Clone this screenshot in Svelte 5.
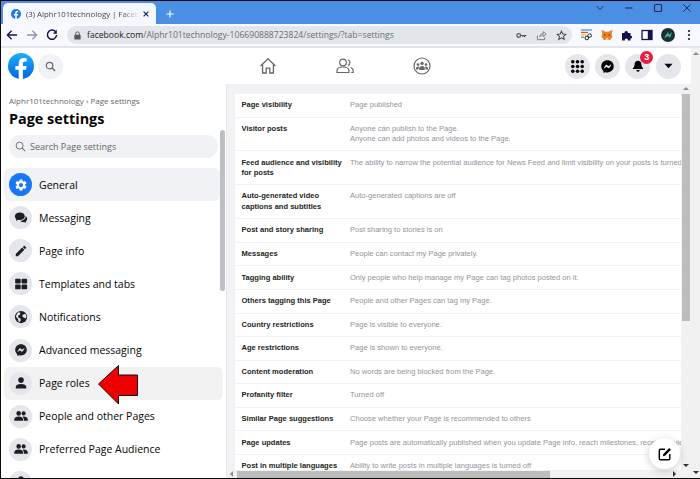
<script>
  const sideItems = [
    { label: 'General', icon: 'gear', state: 'active' },
    { label: 'Messaging', icon: 'chat' },
    { label: 'Page info', icon: 'pencil' },
    { label: 'Templates and tabs', icon: 'grid' },
    { label: 'Notifications', icon: 'globe' },
    { label: 'Advanced messaging', icon: 'messenger' },
    { label: 'Page roles', icon: 'person', state: 'hover' },
    { label: 'People and other Pages', icon: 'people' },
    { label: 'Preferred Page Audience', icon: 'people' },
    { label: '', icon: 'person' }
  ];

  const rows = [
    { label: 'Page visibility', value: ['Page published'] },
    { label: 'Visitor posts', value: ['Anyone can publish to the Page.', 'Anyone can add photos and videos to the Page.'] },
    { label: 'Feed audience and visibility for posts', value: ['The ability to narrow the potential audience for News Feed and limit visibility on your posts is turned off'] },
    { label: 'Auto-generated video captions and subtitles', value: ['Auto-generated captions are off'] },
    { label: 'Post and story sharing', value: ['Post sharing to stories is on'] },
    { label: 'Messages', value: ['People can contact my Page privately.'] },
    { label: 'Tagging ability', value: ['Only people who help manage my Page can tag photos posted on it.'] },
    { label: 'Others tagging this Page', value: ['People and other Pages can tag my Page.'] },
    { label: 'Country restrictions', value: ['Page is visible to everyone.'] },
    { label: 'Age restrictions', value: ['Page is shown to everyone.'] },
    { label: 'Content moderation', value: ['No words are being blocked from the Page.'] },
    { label: 'Profanity filter', value: ['Turned off'] },
    { label: 'Similar Page suggestions', value: ['Choose whether your Page is recommended to others'] },
    { label: 'Page updates', value: ['Page posts are automatically published when you update Page info, reach milestones, receive reviews'] },
    { label: 'Post in multiple languages', value: ['Ability to write posts in multiple languages is turned off'] }
  ];

  const messengerPath = 'M12 2C6.36 2 2 6.13 2 11.7c0 2.91 1.19 5.44 3.14 7.17.16.13.26.35.27.57l.05 1.78c.04.57.61.94 1.13.71l1.98-.87c.17-.06.36-.09.53-.06.9.27 1.9.4 2.9.4 5.64 0 10-4.13 10-9.7S17.64 2 12 2zm6 7.46-2.93 4.67c-.47.73-1.47.92-2.17.37l-2.34-1.73a.6.6 0 0 0-.72 0l-3.16 2.4c-.42.33-.97-.17-.68-.63l2.93-4.67c.47-.73 1.47-.92 2.17-.4l2.34 1.76a.6.6 0 0 0 .72 0l3.16-2.4c.42-.33.97.17.68.63z';
</script>

<div class="window">
  <div class="tabstrip">
    <div class="tab">
      <svg class="favicon" viewBox="0 0 24 24"><circle cx="12" cy="12" r="12" fill="#1877f2"/><path d="M16.6 15.4l.6-3.4h-3.4V9.8c0-1 .5-1.9 2-1.9h1.5V5c0 0-1.4-.2-2.7-.2-2.8 0-4.5 1.6-4.5 4.6V12H7v3.4h3.1V24h3.7v-8.6z" fill="#fff"/></svg>
      <span class="tab-title">(3) Alphr101technology | Facebook</span>
      <svg class="tab-x" viewBox="0 0 10 10"><path d="M2 2l6 6M8 2l-6 6" stroke="#1f2a55" stroke-width="1.5"/></svg>
    </div>
    <svg class="plus" viewBox="0 0 10 10"><path d="M5 .5v9M.5 5h9" stroke="#fff" stroke-width="1.4"/></svg>
    <div class="win-controls">
      <svg viewBox="0 0 10 10"><path d="M1.5 3L5 6.5 8.5 3" fill="none" stroke="#1f2a55"/></svg>
      <svg viewBox="0 0 10 10"><path d="M1.5 5h7" stroke="#1f2a55" stroke-width="1.1"/></svg>
      <svg viewBox="0 0 10 10"><rect x="1.5" y="1.5" width="7" height="7" rx="1" fill="none" stroke="#1f2a55" stroke-width="1.1"/></svg>
      <svg viewBox="0 0 10 10"><path d="M1.5 1.5l7 7M8.5 1.5l-7 7" stroke="#1f2a55"/></svg>
    </div>
  </div>

  <div class="toolbar">
    <svg class="tb-icon" viewBox="0 0 12 12"><path d="M11 6H1.6M5.6 1.8L1.4 6l4.2 4.2" fill="none" stroke="#14144a" stroke-width="1.4"/></svg>
    <svg class="tb-icon" viewBox="0 0 12 12"><path d="M1 6h9.4M6.4 1.8L10.6 6l-4.2 4.2" fill="none" stroke="#8f8fb5" stroke-width="1.3"/></svg>
    <svg class="tb-icon" viewBox="0 0 12 12"><path d="M10 3.4A4.6 4.6 0 1 0 10.6 6" fill="none" stroke="#14144a" stroke-width="1.5"/><path d="M10.8 .8v4H6.8z" fill="#14144a"/></svg>
    <div class="omnibox">
      <svg class="lock" viewBox="0 0 10 10"><rect x="1.5" y="4.2" width="7" height="5.3" rx="1" fill="#55565a"/><path d="M3 4.5V3a2 2 0 0 1 4 0v1.5" fill="none" stroke="#55565a" stroke-width="1.1"/></svg>
      <span class="url"><b>facebook.com</b>/Alphr101technology-106690888723824/settings/?tab=settings</span>
      <svg class="omni-icon" viewBox="0 0 12 12"><circle cx="3" cy="6" r="2" fill="none" stroke="#55565a" stroke-width="1.4"/><path d="M5 6h6.4M9.4 6v2M7.6 6v1.6" stroke="#55565a" stroke-width="1.3"/></svg>
      <svg class="omni-icon" viewBox="0 0 12 12"><path d="M1.5 6v4.5h8V8M4 7.5C4.4 5 6 3.8 8 3.8V1.8L11 4.6 8 7.2V5.4C6.4 5.4 5 6 4 7.5z" fill="none" stroke="#77787c"/></svg>
      <svg class="omni-icon" viewBox="0 0 12 12"><path d="M6 1.2l1.4 3.2 3.4.3-2.6 2.2.8 3.4L6 8.5l-3 1.8.8-3.4L1.2 4.7l3.4-.3z" fill="none" stroke="#45464a" stroke-width="1.1"/></svg>
    </div>
    <div class="extensions">
      <svg viewBox="0 0 12 12"><path d="M0 1h11" stroke="#4285f4" stroke-width="1.2"/><path d="M0 3.4h7" stroke="#ea4335" stroke-width="1.2"/><path d="M0 5.8h5" stroke="#fbbc05" stroke-width="1.2"/><path d="M0 8.2h3" stroke="#34a853" stroke-width="1.2"/><circle cx="5.8" cy="9" r="1.8" fill="none" stroke="#222"/><circle cx="8.6" cy="6.6" r="1.8" fill="none" stroke="#222"/></svg>
      <svg viewBox="0 0 12 12"><path d="M.5.8l4 2h3l4-2-.8 4 .8 3-2.6 3.4-2-.7H5.1l-2 .7L.5 7.8l.8-3z" fill="#e8832a"/><path d="M3 5l2 1-1.5 1zM9 5L7 6l1.5 1z" fill="#5a3414"/><path d="M5 9h2v1.6H5z" fill="#f5d3b0"/></svg>
      <svg viewBox="0 0 12 12"><path d="M1 4h2.600a1.700 1.700 0 1 1 3.300 0H9.500v2.400a1.600 1.600 0 1 1 0 3.200V11.500H6.800a1.500 1.500 0 1 0-2.900 0H1z" fill="#14144a"/></svg>
      <svg viewBox="0 0 12 12"><rect x="1" y="1.5" width="10" height="9" fill="none" stroke="#14144a" stroke-width="1.3"/><rect x="6.8" y="1.5" width="4.2" height="9" fill="#14144a"/></svg>
      <svg class="avatar" viewBox="0 0 14 14"><circle cx="7" cy="7" r="7" fill="#183038"/><path d="M3 10L7 4l1 3 3-3-2 6-1.500-2z" fill="#49b89a"/></svg>
      <svg viewBox="0 0 12 12"><circle cx="6" cy="2" r="1.100" fill="#14144a"/><circle cx="6" cy="6" r="1.100" fill="#14144a"/><circle cx="6" cy="10" r="1.100" fill="#14144a"/></svg>
    </div>
  </div>

  <div class="page">
    <div class="page-main">
      <header class="fb-header">
        <div class="fb-left">
          <svg class="fb-logo" viewBox="0 0 26 26">
            <defs><linearGradient id="fbBlue" x1="0" y1="0" x2="0" y2="1"><stop offset="0" stop-color="#1aaffb"/><stop offset="1" stop-color="#0165e1"/></linearGradient></defs>
            <circle cx="13" cy="13" r="13" fill="url(#fbBlue)"/>
            <path d="M18 16.7l.6-3.7h-3.700v-2.400c0-1 .5-2 2.100-2h1.700V5.400s-1.500-.3-3-.3c-3 0-5 1.800-5 5.100V13H7.400v3.700h3.300V26h4.200v-9.300z" fill="#fff"/>
          </svg>
          <div class="round light">
            <svg viewBox="0 0 12 12" width="11" height="11"><circle cx="5" cy="5" r="3.6" fill="none" stroke="#65676b" stroke-width="1.3"/><path d="M7.700 7.700l3.300 3.300" stroke="#65676b" stroke-width="1.5"/></svg>
          </div>
        </div>
        <nav class="fb-nav">
          <svg viewBox="0 0 18 18" width="18" height="18"><path d="M1.500 9L9 1.800 16.500 9M3.600 7.400V16h3.600v-4.800h3.600V16h3.600V7.400" fill="none" stroke="#65676b" stroke-width="1.3"/></svg>
          <svg viewBox="0 0 18 18" width="18" height="18"><circle cx="7" cy="5.5" r="3.3" fill="none" stroke="#65676b" stroke-width="1.2"/><path d="M1 15.500v-1.500c0-2.600 2.400-4 6-4s6 1.400 6 4v1.500z" fill="none" stroke="#65676b" stroke-width="1.2"/><path d="M12 2.800a3 3 0 0 1 0 5.600M14.500 10.500c1.600.6 2.700 1.700 2.700 3.300v1.700h-2" fill="none" stroke="#65676b" stroke-width="1.2"/></svg>
          <svg viewBox="0 0 18 18" width="18" height="18"><circle cx="9" cy="9" r="8" fill="none" stroke="#65676b" stroke-width="1.2"/><circle cx="9" cy="6.4" r="1.7" fill="#65676b"/><circle cx="5" cy="7.6" r="1.3" fill="#65676b"/><circle cx="13" cy="7.6" r="1.3" fill="#65676b"/><path d="M6.200 13v-1.600c0-1.400 1.300-2.300 2.800-2.300s2.800.9 2.800 2.300V13zM3 12.400v-1c0-1 .9-1.800 2.300-1.800l.6.100-.6 2.700zM15 12.400v-1c0-1-.9-1.800-2.300-1.800l-.6.100.6 2.700z" fill="#65676b"/></svg>
        </nav>
        <div class="fb-right">
          <div class="round">
            <svg viewBox="0 0 13 13" width="13" height="13">
              {#each [1.8, 6.5, 11.2] as cy}
                {#each [1.8, 6.5, 11.2] as cx}
                  <circle {cx} {cy} r="1.8" fill="#050505"/>
                {/each}
              {/each}
            </svg>
          </div>
          <div class="round"><svg viewBox="0 0 24 24" width="15" height="15"><path d={messengerPath} fill="#050505"/></svg></div>
          <div class="round">
            <svg viewBox="0 0 14 14" width="12" height="12"><path d="M7 .8c2.500 0 4 1.800 4 4.200 0 2.200.8 3.400 2 4.600v1H1v-1c1.200-1.200 2-2.400 2-4.600C3 2.600 4.500.8 7 .8z" fill="#050505"/><path d="M5 11.800h4a2 2 0 0 1-4 0z" fill="#050505"/></svg>
            <span class="badge">3</span>
          </div>
          <div class="round"><svg viewBox="0 0 10 6" width="9" height="6"><path d="M.5.5h9L5 5.500z" fill="#050505"/></svg></div>
        </div>
      </header>

      <div class="content">
        <aside class="sidebar">
          <div class="crumbs">Alphr101technology › Page settings</div>
          <h1>Page settings</h1>
          <div class="search">
            <svg viewBox="0 0 12 12" width="11" height="11"><circle cx="5" cy="5" r="3.8" fill="none" stroke="#65676b"/><path d="M7.800 7.800l3.400 3.400" stroke="#65676b" stroke-width="1.1"/></svg>
            <span>Search Page settings</span>
          </div>
          <ul class="menu">
            {#each sideItems as item}
              <li class="item {item.state ?? ''}">
                <span class="icon-wrap">
                  <svg viewBox="0 0 24 24" width="14" height="14">
                    {#if item.icon === 'gear'}
                      <path fill="#fff" d="M19.14 12.94c.04-.3.06-.61.06-.94 0-.32-.02-.64-.07-.94l2.03-1.58a.49.49 0 0 0 .12-.61l-1.92-3.32a.488.488 0 0 0-.59-.22l-2.39.96c-.5-.38-1.03-.7-1.62-.94l-.36-2.54a.484.484 0 0 0-.48-.41h-3.84c-.24 0-.43.17-.47.41l-.36 2.54c-.59.24-1.13.57-1.62.94l-2.39-.96c-.22-.08-.47 0-.59.22L2.74 8.87c-.12.21-.08.47.12.61l2.03 1.58c-.05.3-.09.63-.09.94s.02.64.07.94l-2.03 1.58a.49.49 0 0 0-.12.61l1.92 3.32c.12.22.37.29.59.22l2.39-.96c.5.38 1.03.7 1.62.94l.36 2.54c.05.24.24.41.48.41h3.84c.24 0 .44-.17.47-.41l.36-2.54c.59-.24 1.13-.56 1.62-.94l2.39.96c.22.08.47 0 .59-.22l1.92-3.32c.12-.22.07-.47-.12-.61l-2.01-1.58zM12 15.6c-1.98 0-3.6-1.62-3.6-3.6s1.62-3.6 3.6-3.6 3.6 1.62 3.6 3.6-1.62 3.6-3.6 3.6z"/>
                    {:else if item.icon === 'chat'}
                      <path fill="#1c1e21" d="M10 2.500C5 2.500 1.500 5.300 1.500 9c0 1.900.9 3.500 2.400 4.600L3.400 17l3.700-1.900c.9.2 1.900.4 2.900.4 5 0 8.500-2.800 8.500-6.500S15 2.500 10 2.500z"/>
                      <path fill="#1c1e21" d="M20 8.300c.1.300.1.500.1.800 0 4.400-4.100 7.700-9.600 8.100 1.200 1.200 3 1.900 5 1.900.6 0 1.300-.1 1.900-.2l3.100 1.800-.4-3c1.500-1 2.400-2.500 2.400-4.200 0-2-1-3.700-2.500-5.200z"/>
                    {:else if item.icon === 'pencil'}
                      <path fill="#1c1e21" d="M3 17.250V21h3.750L17.810 9.940l-3.750-3.750L3 17.250zM20.710 7.040c.39-.39.39-1.020 0-1.410l-2.340-2.340a.9959.9959 0 0 0-1.410 0l-1.830 1.830 3.750 3.750 1.830-1.830z"/>
                    {:else if item.icon === 'grid'}
                      <rect x="2" y="3" width="9.500" height="8" rx="1.500" fill="#1c1e21"/><rect x="13" y="3" width="9.500" height="8" rx="1.500" fill="#1c1e21"/><rect x="2" y="13" width="9.500" height="8" rx="1.500" fill="#1c1e21"/><rect x="13" y="13" width="9.500" height="8" rx="1.500" fill="#1c1e21"/>
                    {:else if item.icon === 'globe'}
                      <circle cx="12" cy="12" r="10.500" fill="#1c1e21"/>
                      <path fill="#e4e6eb" d="M7 3.800l4 1-.6 3-3.400 2.200.6 3.400 3.600 1 .3 3-1.600 3.200-2.300-1-.6-4-3.400-3.400.2-3.200zM15 8l4.500-1.400 2 4.400-1.800 3.500-3.200-1.500-2.500-2.500z"/>
                    {:else if item.icon === 'messenger'}
                      <path fill="#1c1e21" d={messengerPath}/>
                    {:else if item.icon === 'person'}
                      <circle cx="12" cy="7" r="4.800" fill="#1c1e21"/><path d="M3 21.500v-2.500c0-3.500 3.500-5.500 9-5.500s9 2 9 5.500v2.500z" fill="#1c1e21"/>
                    {:else}
                      <circle cx="8" cy="7.500" r="3.900" fill="#1c1e21"/><circle cx="16.500" cy="7.500" r="3.500" fill="#1c1e21"/><path d="M.5 20v-2c0-3 3-5 7.500-5s7.500 2 7.500 5v2z" fill="#1c1e21"/><path d="M16.800 20v-2.300c0-1.800-.8-3.300-2.200-4.500.7-.1 1.300-.2 2-.2 4 0 7 1.900 7 4.800V20z" fill="#1c1e21"/>
                    {/if}
                  </svg>
                </span>
                <span class="item-label">{item.label}</span>
              </li>
            {/each}
          </ul>
          <div class="side-thumb"></div>
          <svg class="red-arrow" viewBox="0 0 42 42" width="42" height="42"><path d="M1.500 20L21.500 1.500V11H40.500V31.500H21.500V40z" fill="#ee0000" stroke="#111"/></svg>
        </aside>

        <section class="panel">
          <div class="panel-top">
            <div class="viewport">
              <div class="table">
                {#each rows as row}
                  <div class="row">
                    <div class="row-label">{row.label}</div>
                    <div class="row-value">
                      {#each row.value as line}
                        <div>{line}</div>
                      {/each}
                    </div>
                  </div>
                {/each}
              </div>
            </div>
            <div class="vscroll">
              <span class="arrow up"></span>
              <div class="vthumb"></div>
              <span class="arrow down"></span>
            </div>
          </div>
          <div class="hscroll">
            <span class="arrow left"></span>
            <div class="hthumb"></div>
            <span class="arrow right"></span>
          </div>
          <button class="fab" aria-label="Compose">
            <svg viewBox="0 0 16 16" width="14" height="14"><path d="M8 2.500H3a1.500 1.500 0 0 0-1.500 1.500v9A1.500 1.500 0 0 0 3 14.500h9a1.500 1.500 0 0 0 1.500-1.500V8" fill="none" stroke="#050505" stroke-width="1.7"/><path d="M5.500 10.500l.6-2.600L12.800 1.200l2 2-6.700 6.700z" fill="#050505"/></svg>
          </button>
        </section>
      </div>
    </div>

    <div class="outer-scroll">
      <span class="arrow up"></span>
      <span class="arrow down"></span>
    </div>
  </div>
</div>

<style>
  :global(body) {
    margin: 0;
    background: #000;
  }

  .window {
    width: 699px;
    height: 477px;
    border: solid #0a0a0a;
    border-width: 1px 0 1px 1px;
    display: flex;
    flex-direction: column;
    overflow: hidden;
    font-family: 'Open Sans', 'Liberation Sans', sans-serif;
    background: #fff;
  }

  .tabstrip {
    height: 23px;
    flex: none;
    background: #4a8fe3;
    display: flex;
    align-items: flex-end;
    padding-left: 2px;
  }

  .tab {
    width: 153px;
    height: 21px;
    box-sizing: border-box;
    background: #f4f7fe;
    border-radius: 5px 5px 0 0;
    display: flex;
    align-items: center;
    padding: 0 6px 0 8px;
  }

  .favicon {
    width: 10px;
    height: 10px;
    flex: none;
  }

  .tab-title {
    flex: 1;
    margin-left: 5px;
    font-size: 7.8px;
    color: #45474f;
    white-space: nowrap;
    overflow: hidden;
    -webkit-mask-image: linear-gradient(90deg, #000 85%, transparent);
    mask-image: linear-gradient(90deg, #000 85%, transparent);
  }

  .tab-x {
    width: 8px;
    height: 8px;
    margin-left: 3px;
    flex: none;
  }

  .plus {
    width: 8px;
    height: 8px;
    margin: 0 0 6px 10px;
  }

  .win-controls {
    margin-left: auto;
    align-self: flex-start;
    display: flex;
    gap: 19px;
    padding: 2px 8px 0 0;
  }

  .win-controls svg {
    width: 10px;
    height: 10px;
  }

  .toolbar {
    height: 22px;
    flex: none;
    background: #f7f9fe;
    display: flex;
    align-items: center;
    padding-left: 5px;
    gap: 8px;
  }

  .tb-icon {
    width: 12px;
    height: 12px;
    flex: none;
  }

  .omnibox {
    margin-left: 1px;
    width: 505px;
    height: 18px;
    box-sizing: border-box;
    flex: none;
    background: #e2e5ea;
    border-radius: 9px;
    display: flex;
    align-items: center;
    padding: 0 5px 0 6px;
    font-size: 8.6px;
  }

  .lock {
    width: 9px;
    height: 9px;
    flex: none;
  }

  .url {
    flex: 1;
    margin-left: 5px;
    color: #6b6d72;
    white-space: nowrap;
  }

  .url b {
    font-weight: 400;
    color: #202124;
  }

  .omni-icon {
    width: 11px;
    height: 11px;
    flex: none;
    margin-left: 9px;
  }

  .extensions {
    display: flex;
    align-items: center;
    gap: 8px;
    margin-left: 1px;
  }

  .extensions svg {
    width: 12px;
    height: 12px;
  }

  .extensions .avatar {
    width: 14px;
    height: 14px;
  }

  .page {
    flex: 1;
    min-height: 0;
    display: flex;
    border-top: 2px solid #e3e5ea;
  }

  .page-main {
    width: 690px;
    display: flex;
    flex-direction: column;
  }

  .fb-header {
    height: 36px;
    flex: none;
    box-sizing: border-box;
    background: #fff;
    display: flex;
    align-items: center;
    padding: 0 10.5px 0 7px;
  }

  .fb-left {
    width: 222px;
    display: flex;
    align-items: center;
    gap: 4px;
    flex: none;
  }

  .fb-logo {
    width: 26px;
    height: 26px;
  }

  .round {
    position: relative;
    width: 25px;
    height: 25px;
    border-radius: 50%;
    background: #e4e6eb;
    display: flex;
    align-items: center;
    justify-content: center;
    flex: none;
  }

  .round.light {
    background: #f0f2f5;
  }

  .fb-nav {
    width: 230px;
    display: grid;
    grid-template-columns: repeat(3, 1fr);
    justify-items: center;
    flex: none;
  }

  .fb-right {
    margin-left: auto;
    display: flex;
    gap: 5.3px;
  }

  .badge {
    position: absolute;
    top: -3px;
    right: -3px;
    width: 13px;
    height: 13px;
    border-radius: 50%;
    background: #e41e3f;
    color: #fff;
    font-size: 9px;
    font-weight: 700;
    line-height: 13px;
    text-align: center;
    font-family: 'Liberation Sans', sans-serif;
  }

  .content {
    flex: 1;
    min-height: 0;
    display: flex;
  }

  .sidebar {
    position: relative;
    width: 226px;
    flex: none;
    box-sizing: border-box;
    overflow: hidden;
    background: #fff;
    padding: 11px 0 0;
    border-right: 1px solid #e4e6eb;
  }

  .crumbs {
    margin-left: 8px;
    font-size: 8px;
    line-height: 12px;
    color: #65676b;
  }

  h1 {
    margin: 2px 0 0 8px;
    font-size: 14.4px;
    line-height: 19px;
    font-weight: 700;
    color: #050505;
  }

  .search {
    margin: 7px 0 0 8px;
    width: 209px;
    height: 23px;
    border-radius: 12px;
    background: #f0f2f5;
    display: flex;
    align-items: center;
    gap: 4px;
    padding-left: 6px;
    box-sizing: border-box;
    font-size: 9px;
    color: #65676b;
  }

  .menu {
    list-style: none;
    margin: 10px 0 0;
    padding: 0 0 0 3px;
  }

  .item {
    width: 216px;
    height: 33.1px;
    box-sizing: border-box;
    display: flex;
    align-items: center;
    padding-left: 5px;
    border-radius: 6px;
    gap: 7px;
    font-size: 10.5px;
    color: #050505;
  }

  .item.active {
    background: #f0f2f5;
  }

  .item.hover {
    background: #f2f2f2;
    width: 219px;
  }

  .icon-wrap {
    width: 23px;
    height: 23px;
    border-radius: 50%;
    background: #e4e6eb;
    display: flex;
    align-items: center;
    justify-content: center;
    flex: none;
  }

  .active .icon-wrap {
    background: #1877f2;
  }

  .side-thumb {
    position: absolute;
    left: 219px;
    top: 46px;
    width: 5px;
    height: 161px;
    border-radius: 3px;
    background: #bcc0c4;
  }

  .red-arrow {
    position: absolute;
    left: 96px;
    top: 280px;
  }

  .panel {
    position: relative;
    flex: 1;
    min-width: 0;
    display: flex;
    flex-direction: column;
    background: #f0f2f5;
  }

  .panel-top {
    flex: 1;
    min-height: 0;
    display: flex;
  }

  .viewport {
    flex: 1;
    min-width: 0;
    overflow: hidden;
    padding: 10px 0 0 8px;
  }

  .table {
    width: 560px;
    background: #fff;
    font-family: 'Liberation Sans', sans-serif;
    font-size: 7.55px;
    line-height: 10.3px;
  }

  .row {
    display: grid;
    grid-template-columns: 108.5px 1fr;
    padding: 6.15px 0 6.15px 6.5px;
    border-bottom: 1px solid #f0f2f5;
  }

  .row-label {
    font-weight: 700;
    color: #1c1e21;
  }

  .row-value {
    color: #90949c;
    white-space: nowrap;
  }

  .vscroll {
    width: 10px;
    flex: none;
    background: #f1f1f1;
    display: flex;
    flex-direction: column;
    align-items: center;
    padding-top: 3px;
    box-sizing: border-box;
  }

  .vthumb {
    width: 8px;
    height: 227px;
    margin-top: 4px;
    background: #bdbdbd;
  }

  .vscroll .down {
    margin-top: auto;
    margin-bottom: 3px;
  }

  .hscroll {
    height: 8px;
    flex: none;
    background: #f1f1f1;
    display: flex;
    align-items: center;
    padding: 0 15px 0 3px;
  }

  .hthumb {
    width: 313px;
    height: 7px;
    margin-left: 4px;
    background: #bdbdbd;
  }

  .hscroll .right {
    margin-left: auto;
  }

  .arrow {
    width: 0;
    height: 0;
    display: block;
    flex: none;
    border: 3px solid transparent;
  }

  .arrow.up {
    border-top-width: 0;
    border-bottom: 3px solid #8a8a8a;
  }

  .arrow.down {
    border-bottom-width: 0;
    border-top: 3px solid #333;
  }

  .arrow.left {
    border-left-width: 0;
    border-right: 3px solid #8a8a8a;
  }

  .arrow.right {
    border-right-width: 0;
    border-left: 3px solid #333;
  }

  .fab {
    position: absolute;
    right: 11px;
    bottom: 9px;
    width: 31px;
    height: 31px;
    padding: 0;
    border: 0;
    border-radius: 50%;
    background: #fff;
    box-shadow: 0 2px 8px rgba(0, 0, 0, 0.2);
    display: flex;
    align-items: center;
    justify-content: center;
  }

  .outer-scroll {
    width: 9px;
    flex: none;
    background: #f1f1f1;
    display: flex;
    flex-direction: column;
    justify-content: space-between;
    align-items: center;
    padding: 4px 0;
    box-sizing: border-box;
  }
</style>
